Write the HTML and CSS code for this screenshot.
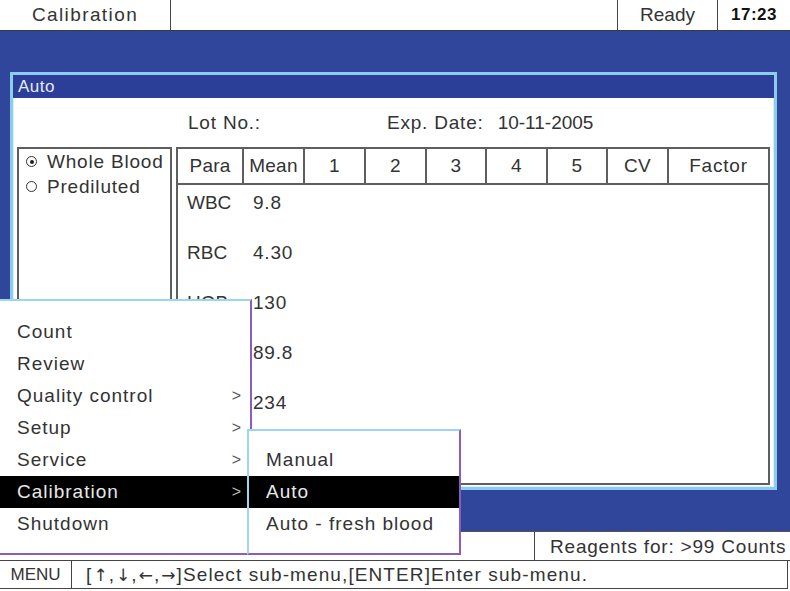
FILE: index.html
```html
<!DOCTYPE html>
<html lang="en">
<head>
  <meta charset="UTF-8" />
  <title>Calibration</title>
  <link rel="stylesheet" href="styles.css">
</head>
<body>
<div class="screen">
  <header class="topbar">
    <div class="tb-cell tb-title">Calibration</div>
    <div class="tb-fill"></div>
    <div class="tb-cell tb-status">Ready</div>
    <div class="tb-cell tb-clock">17:23</div>
  </header>

  <main class="desk">
    <section class="dialog">
      <div class="dialog-title">Auto</div>
      <div class="dialog-body">
        <div class="lot-row">
          <span class="lot-label">Lot No.:</span>
          <span class="exp-label">Exp. Date:</span>
          <span class="exp-value">10-11-2005</span>
        </div>
        <div class="dialog-main">
          <div class="mode-box">
            <div class="radio-item"><span class="radio checked"></span>Whole Blood</div>
            <div class="radio-item"><span class="radio"></span>Prediluted</div>
          </div>
          <div class="calib-table">
            <div class="t-head">
              <div>Para</div>
              <div>Mean</div>
              <div>1</div>
              <div>2</div>
              <div>3</div>
              <div>4</div>
              <div>5</div>
              <div>CV</div>
              <div>Factor</div>
            </div>
            <div class="t-row"><div class="t-para">WBC</div><div class="t-mean">9.8</div></div>
            <div class="t-row"><div class="t-para">RBC</div><div class="t-mean">4.30</div></div>
            <div class="t-row"><div class="t-para">HGB</div><div class="t-mean">130</div></div>
            <div class="t-row"><div class="t-para">MCV</div><div class="t-mean">89.8</div></div>
            <div class="t-row"><div class="t-para">PLT</div><div class="t-mean">234</div></div>
          </div>
        </div>
      </div>
    </section>
  </main>

  <div class="status-row">
    <div class="status-left"></div>
    <div class="status-right">Reagents for: &gt;99 Counts</div>
  </div>

  <footer class="hintbar">
    <div class="hint-key">MENU</div>
    <div class="hint-text">[<span class="key-arrow">↑</span>,<span class="key-arrow">↓</span>,<span class="key-arrow">←</span>,<span class="key-arrow">→</span>]Select sub-menu,[ENTER]Enter sub-menu.</div>
  </footer>

  <!-- popup menus sit over the dialog -->
  <nav class="menu">
    <div class="menu-item">Count</div>
    <div class="menu-item">Review</div>
    <div class="menu-item">Quality control<span class="arrow">&gt;</span></div>
    <div class="menu-item">Setup<span class="arrow">&gt;</span></div>
    <div class="menu-item">Service<span class="arrow">&gt;</span></div>
    <div class="menu-item active">Calibration<span class="arrow">&gt;</span></div>
    <div class="menu-item">Shutdown</div>
  </nav>

  <nav class="submenu">
    <div class="menu-item">Manual</div>
    <div class="menu-item active">Auto</div>
    <div class="menu-item">Auto - fresh blood</div>
  </nav>
</div>
</body>
</html>
```

FILE: styles.css
```css
body {
  margin: 0;
  font-family: "Liberation Sans", Arial, sans-serif;
  font-size: 19px;
  color: #333;
  background: #ffffff;
}

.screen {
  position: relative;
  width: 790px;
  height: 591px;
  overflow: hidden;
  background: #ffffff;
}

/* top bar */
.topbar {
  display: flex;
  height: 30px;
  border-bottom: 1px solid #3a3a3a;
  background: #ffffff;
}

.tb-cell {
  display: flex;
  align-items: center;
  justify-content: center;
}

.tb-title {
  width: 170px;
  border-right: 1px solid #444;
  letter-spacing: 1.4px;
}

.tb-fill {
  flex: 1;
}

.tb-status {
  width: 99px;
  border-left: 1px solid #444;
  border-right: 1px solid #444;
}

.tb-clock {
  width: 72px;
  font-weight: bold;
  font-size: 17px;
  letter-spacing: 0.5px;
  color: #111;
}

/* blue desktop */
.desk {
  height: 500px;
  background: #30469a;
  padding: 41px 0 0 10px;
  box-sizing: border-box;
}

.dialog {
  width: 767px;
  border: 3px solid #8ccdee;
  box-sizing: border-box;
  background: #ffffff;
}

.dialog-title {
  height: 23px;
  line-height: 24px;
  background: #2b3e98;
  color: #e6ebf8;
  padding-left: 5px;
  font-size: 17px;
  letter-spacing: 0.5px;
}

.dialog-body {
  height: 389px;
  display: flex;
  flex-direction: column;
  padding: 0 2px 2px 4px;
  box-sizing: border-box;
  box-shadow: inset 1px 0 0 #d9f0fa, inset -1px 0 0 #d9f0fa, inset 0 -1px 0 #d9f0fa;
}

.lot-row {
  height: 49px;
  display: flex;
  align-items: center;
  padding-left: 171px;
  letter-spacing: 0.8px;
}

.exp-label {
  margin-left: 126px;
}

.exp-value {
  margin-left: 14px;
  letter-spacing: 0;
}

.dialog-main {
  flex: 1;
  display: flex;
  gap: 4px;
}

.mode-box {
  width: 155px;
  border: 2px solid #5e5e5e;
  box-sizing: border-box;
}

.radio-item {
  display: flex;
  align-items: center;
  height: 25px;
  padding-left: 7px;
  letter-spacing: 0.8px;
}

.radio {
  width: 11px;
  height: 11px;
  border: 1.5px solid #333;
  border-radius: 50%;
  box-sizing: border-box;
  margin-right: 10px;
  display: flex;
  align-items: center;
  justify-content: center;
}

.radio.checked::after {
  content: "";
  width: 4px;
  height: 4px;
  border-radius: 50%;
  background: #222;
}

/* calibration table */
.calib-table {
  width: 594px;
  border: 2px solid #5e5e5e;
  box-sizing: border-box;
}

.t-head,
.t-row {
  display: grid;
  grid-template-columns: 66px 61px 61px 61px 60px 61px 60px 61px 1fr;
}

.t-head {
  height: 36px;
  border-bottom: 2px solid #5e5e5e;
  box-sizing: border-box;
}

.t-head div {
  display: flex;
  align-items: center;
  justify-content: center;
  border-right: 2px solid #5e5e5e;
  letter-spacing: 0.2px;
}

.t-head div:last-child {
  border-right: none;
  letter-spacing: 0.8px;
}

.t-row {
  height: 50px;
  line-height: 35px;
}

.t-para,
.t-mean {
  padding-left: 9px;
}

.t-mean {
  letter-spacing: 0.8px;
}

/* status + hint bars */
.status-row {
  display: flex;
  height: 30px;
  border-top: 1px solid #555;
  border-bottom: 1px solid #444;
  box-sizing: border-box;
}

.status-left {
  width: 534px;
  border-right: 1px solid #444;
}

.status-right {
  padding-left: 15px;
  line-height: 29px;
  letter-spacing: 0.8px;
  white-space: nowrap;
}

.hintbar {
  display: flex;
  width: 788px;
  height: 28px;
  border-right: 1px solid #444;
  border-bottom: 1px solid #444;
  box-sizing: border-box;
}

.hint-key {
  width: 71px;
  border-right: 1px solid #444;
  display: flex;
  align-items: center;
  justify-content: center;
  font-size: 17px;
}

.hint-text {
  padding-left: 14px;
  line-height: 28px;
  letter-spacing: 1.1px;
  white-space: nowrap;
}

.key-arrow {
  font-family: "DejaVu Sans", sans-serif;
  font-size: 17px;
  color: #333;
  letter-spacing: 0;
  margin: 0 1px;
}

/* popup menus */
.menu,
.submenu {
  position: absolute;
  background: #ffffff;
  box-sizing: border-box;
  border-top: 2px solid #9ad6ee;
  border-bottom: 2px solid #8a5cc0;
  border-right: 2px solid #8a5cc0;
}

.menu {
  left: 0;
  top: 299px;
  width: 252px;
  height: 256px;
  padding-top: 15px;
}

.submenu {
  left: 247px;
  top: 429px;
  width: 214px;
  height: 126px;
  padding-top: 13px;
  border-left: 2px solid #9ad6ee;
}

.menu-item {
  position: relative;
  height: 32px;
  line-height: 32px;
  padding-left: 17px;
  letter-spacing: 1px;
}

.menu .menu-item {
  margin-right: 3px;
}

.menu-item.active {
  background: #000000;
  color: #e8e8e8;
}

.arrow {
  position: absolute;
  right: 5px;
  top: 0;
  font-size: 16px;
  color: #555;
}

.menu-item.active .arrow {
  color: #bbbbbb;
}
```
